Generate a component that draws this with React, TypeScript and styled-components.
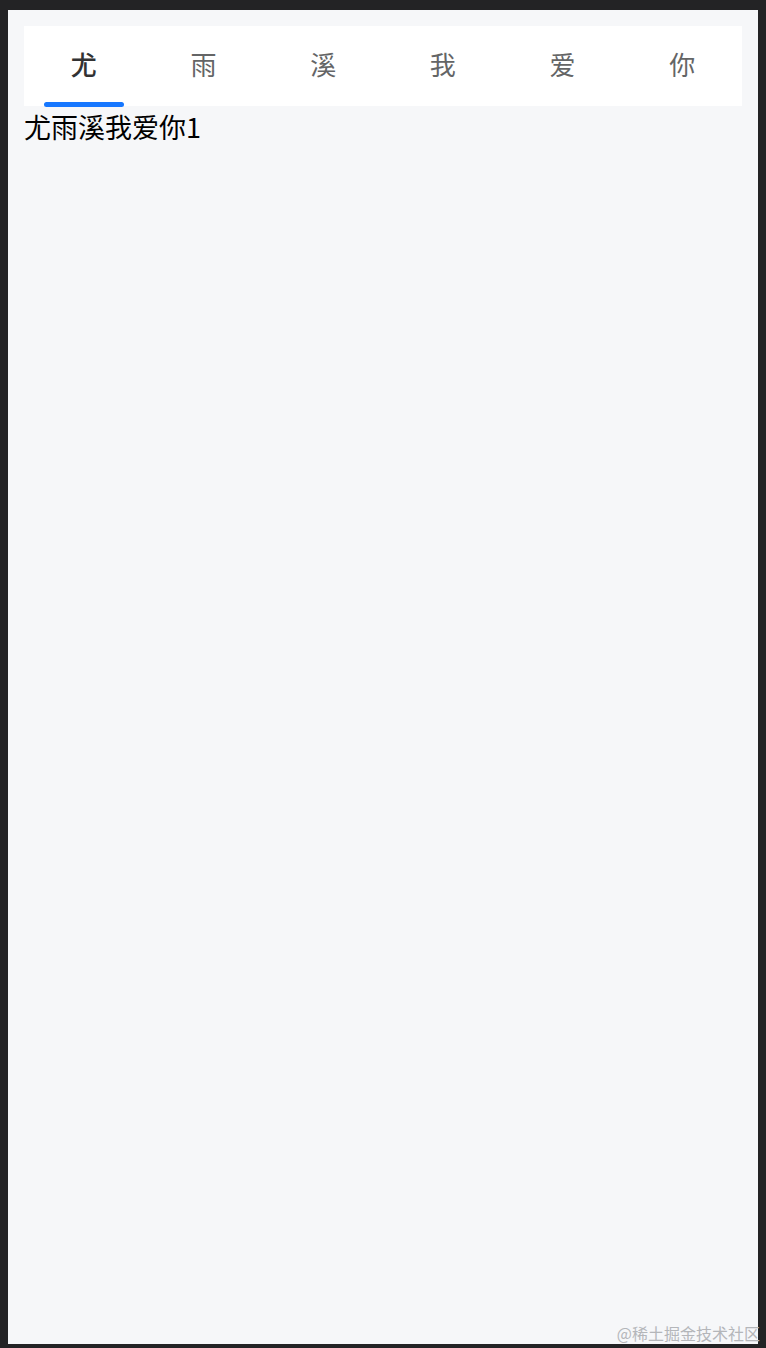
import React, { useState } from "react";
import styled, { createGlobalStyle } from "styled-components";

const Global = createGlobalStyle`
  html, body {
    margin: 0;
    padding: 0;
    background: #232325;
  }
  body {
    font-family: "Noto Sans CJK SC", "Noto Sans", sans-serif;
  }
`;

const Frame = styled.div`
  position: relative;
  box-sizing: border-box;
  margin: 10px 8px 0 8px;
  height: 1334px;
  background: #f6f7f9;
  padding: 16px 16px 0 16px;
`;

const TabBar = styled.div`
  display: grid;
  grid-template-columns: repeat(6, 1fr);
  height: 80px;
  background: #ffffff;
`;

const Tab = styled.div<{ $active: boolean }>`
  position: relative;
  display: flex;
  align-items: center;
  justify-content: center;
  font-size: 26px;
  color: ${(p) => (p.$active ? "#323233" : "#646566")};
  font-weight: ${(p) => (p.$active ? 500 : 400)};
  cursor: pointer;
  padding-bottom: 5px;
  box-sizing: border-box;
`;

const Line = styled.span`
  position: absolute;
  left: 50%;
  bottom: -1px;
  width: 80px;
  height: 5px;
  margin-left: -40px;
  border-radius: 3px;
  background: #1677ff;
`;

const Content = styled.div`
  font-size: 27px;
  line-height: 42px;
  color: #000;
`;

const Watermark = styled.div`
  position: absolute;
  right: -2px;
  bottom: 0px;
  font-size: 16px;
  line-height: 22px;
  color: #b4b6ba;
  white-space: nowrap;
  overflow: hidden;
`;

const tabs = ["尤", "雨", "溪", "我", "爱", "你"];

export default function App() {
  const [active, setActive] = useState(0);
  return (
    <>
      <Global />
      <Frame>
        <TabBar>
          {tabs.map((t, i) => (
            <Tab key={t} $active={i === active} onClick={() => setActive(i)}>
              {t}
              {i === active && <Line />}
            </Tab>
          ))}
        </TabBar>
        <Content>尤雨溪我爱你{active + 1}</Content>
        <Watermark>@稀土掘金技术社区</Watermark>
      </Frame>
    </>
  );
}
